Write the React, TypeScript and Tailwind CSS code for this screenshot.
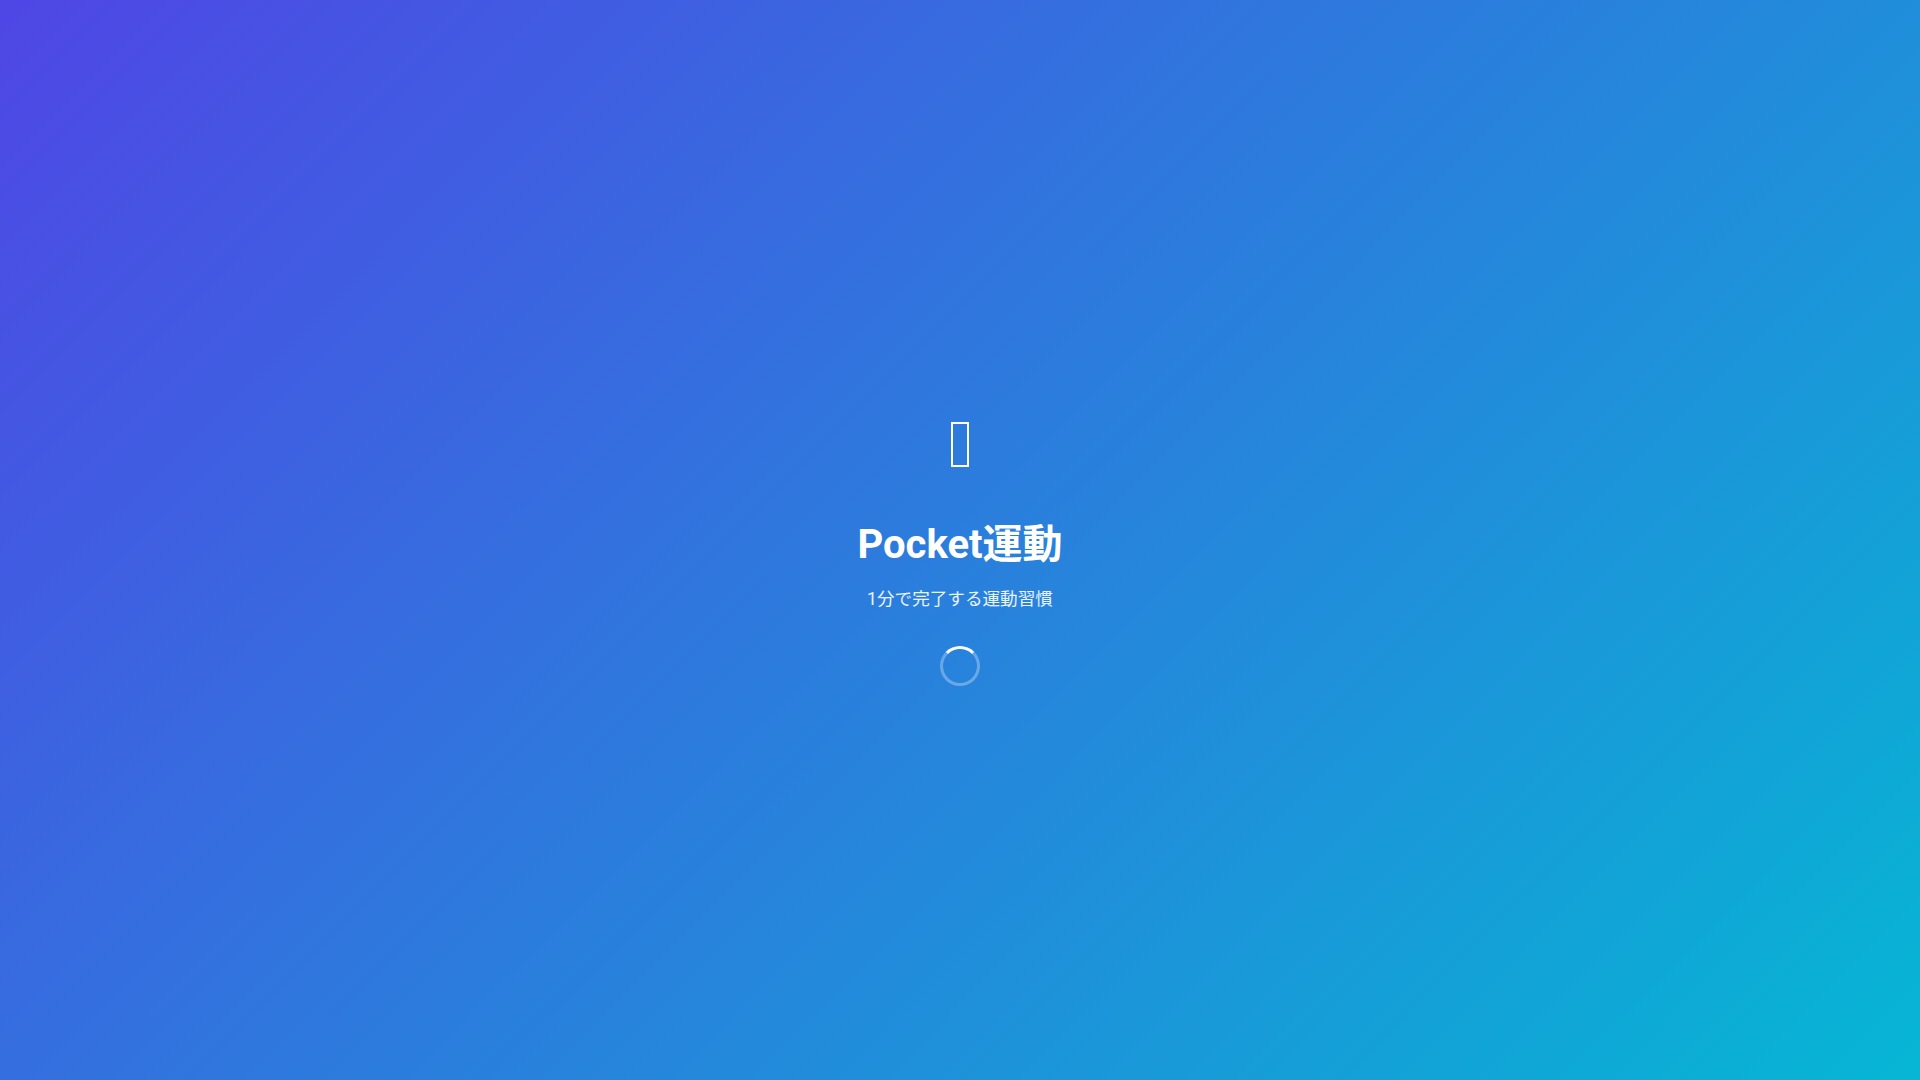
import React from "react";

export default function App() {
  return (
    <div
      className="min-h-screen w-full flex flex-col items-center justify-center text-white bg-[linear-gradient(135deg,#4f46e5_0%,#06b6d4_100%)]"
      style={{ fontFamily: "Roboto, 'Noto Sans CJK JP', sans-serif" }}
    >
      <div className="flex flex-col items-center">
        <div className="h-[100px] flex items-center justify-center" aria-label="icon">
          <div className="w-[18px] h-[45px] border-2 border-white" />
        </div>
        <h1 className="mt-[26px] text-[40px] leading-[48px] font-bold">Pocket運動</h1>
        <p className="mt-[17px] text-[17.6px] leading-[26px] text-white/90">1分で完了する運動習慣</p>
        <div className="mt-[34px] w-10 h-10 rounded-full border-[3px] border-white/30 border-t-white" />
      </div>
    </div>
  );
}
